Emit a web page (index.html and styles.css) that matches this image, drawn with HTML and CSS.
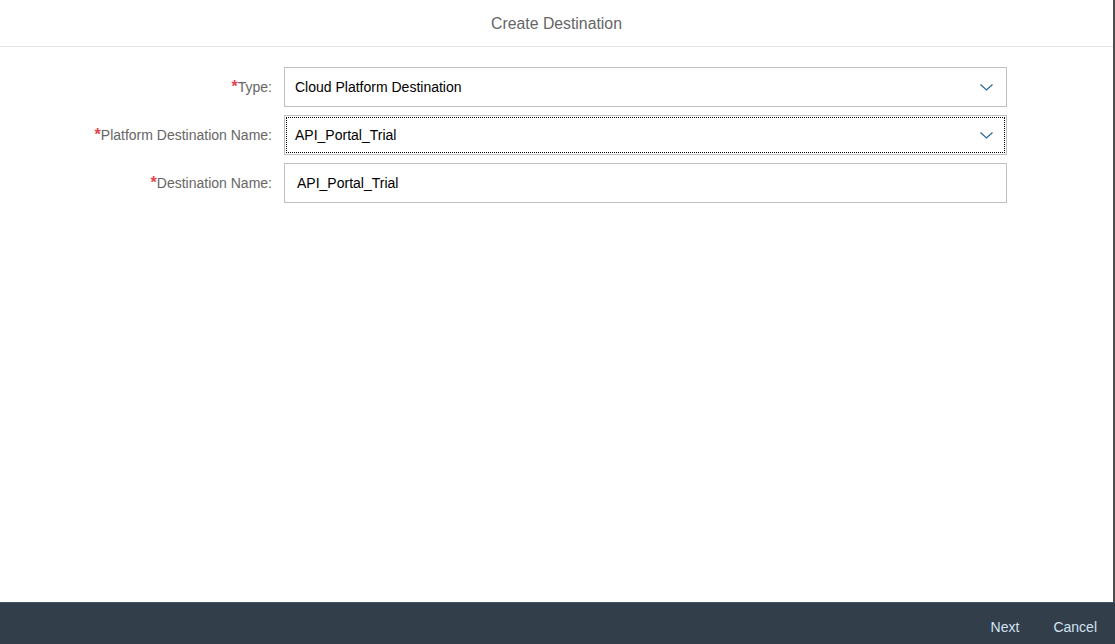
FILE: index.html
```html
<!DOCTYPE html>
<html>
<head>
<meta charset="utf-8">
<link rel="stylesheet" href="styles.css">
</head>
<body>
<div class="dialog">
  <div class="main">
    <header class="header">Create Destination</header>
    <div class="content">
      <form class="form">
        <div class="row">
          <label class="label"><span class="req">*</span>Type:</label>
          <div class="field select">
            <span class="value">Cloud Platform Destination</span>
            <svg class="chev" width="13" height="7" viewBox="0 0 13 7"><polyline points="0.5,0.5 6.5,6 12.5,0.5" fill="none" stroke="#2a6596" stroke-width="1.2"/></svg>
          </div>
        </div>
        <div class="row">
          <label class="label"><span class="req">*</span>Platform Destination Name:</label>
          <div class="field select focused">
            <span class="value">API_Portal_Trial</span>
            <svg class="chev" width="13" height="7" viewBox="0 0 13 7"><polyline points="0.5,0.5 6.5,6 12.5,0.5" fill="none" stroke="#2a6596" stroke-width="1.2"/></svg>
          </div>
        </div>
        <div class="row">
          <label class="label"><span class="req">*</span>Destination Name:</label>
          <div class="field input">
            <span class="value">API_Portal_Trial</span>
          </div>
        </div>
      </form>
    </div>
  </div>
  <footer class="footer">
    <button class="btn" type="button">Next</button>
    <button class="btn" type="button">Cancel</button>
  </footer>
</div>
</body>
</html>
```

FILE: styles.css
```css
html, body {
  margin: 0;
  padding: 0;
  height: 100%;
  background: #ffffff;
}
body {
  font-family: "Liberation Sans", Arial, sans-serif;
  color: #32363a;
}
.dialog {
  width: 1115px;
  height: 644px;
  display: flex;
  flex-direction: column;
}
.main {
  flex: 1;
  display: flex;
  flex-direction: column;
  border-right: 2px solid #4d4d4d;
  min-height: 0;
}
.header {
  height: 46px;
  box-sizing: border-box;
  padding-top: 2px;
  border-bottom: 1px solid #e5e5e5;
  display: flex;
  align-items: center;
  justify-content: center;
  font-size: 15.8px;
  color: #666666;
  height: 47px;
}
.content {
  flex: 1;
  padding-top: 20px;
}
.form {
  display: flex;
  flex-direction: column;
  gap: 8px;
  margin: 0;
}
.row {
  display: flex;
  align-items: center;
  gap: 12px;
}
.label {
  width: 272px;
  flex: none;
  text-align: right;
  font-size: 14px;
  color: #666666;
  padding-bottom: 1px;
}
.req {
  color: #e34352;
  font-size: 16px;
  font-weight: bold;
}
.field {
  width: 723px;
  height: 40px;
  box-sizing: border-box;
  border: 1px solid #bfbfbf;
  display: flex;
  align-items: center;
  padding-left: 10px;
  padding-right: 13px;
  padding-bottom: 1px;
  font-size: 14px;
  color: #000000;
  background: #ffffff;
}
.field.input {
  padding-left: 12px;
}
.value {
  flex: 1;
}
.chev {
  flex: none;
  display: block;
  margin-top: 2px;
}
.focused {
  outline: 1px dotted #000000;
  outline-offset: -3px;
}
.footer {
  background: #323e4a;
  border-top: 1px solid #3f5466;
  display: flex;
  justify-content: flex-end;
  align-items: center;
  gap: 14px;
  padding-right: 8px;
  padding-top: 6px;
  box-sizing: border-box;
  height: 42px;
}
.btn {
  background: transparent;
  border: none;
  color: #d1e3f2;
  font-family: "Liberation Sans", Arial, sans-serif;
  font-size: 14px;
  padding: 0 10px;
  height: 32px;
  cursor: pointer;
}
```
